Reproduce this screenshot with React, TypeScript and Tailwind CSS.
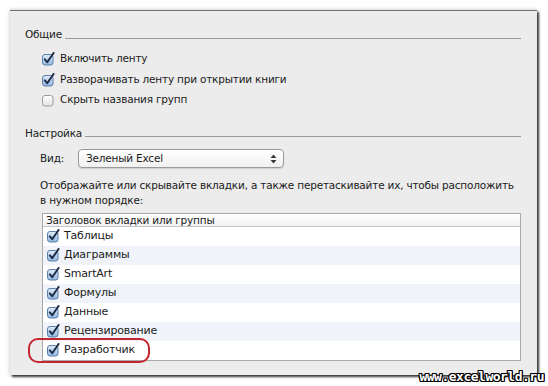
import React from "react";

function CheckBox({ checked }: { checked: boolean }) {
  return (
    <svg width="14" height="14" viewBox="0 0 14 14" className="shrink-0">
      <defs>
        <linearGradient id="cbOn" x1="0" y1="0" x2="0" y2="1">
          <stop offset="0" stopColor="#e2edf9" />
          <stop offset="1" stopColor="#8fb6e3" />
        </linearGradient>
        <linearGradient id="cbOff" x1="0" y1="0" x2="0" y2="1">
          <stop offset="0" stopColor="#ffffff" />
          <stop offset="1" stopColor="#e3e3e3" />
        </linearGradient>
      </defs>
      <rect
        x="0.5"
        y="2.5"
        width="10.5"
        height="10.5"
        rx="2.5"
        fill={checked ? "url(#cbOn)" : "url(#cbOff)"}
        stroke={checked ? "#5a7ea8" : "#9c9c9c"}
      />
      {checked && (
        <path
          d="M2.8 7.4 L5.2 10.2 L11.6 1"
          fill="none"
          stroke="#1d2b45"
          strokeWidth="2"
          strokeLinecap="round"
          strokeLinejoin="round"
        />
      )}
    </svg>
  );
}

function SectionTitle({ title }: { title: string }) {
  return (
    <div className="flex h-4 items-center gap-[3px]">
      <span>{title}</span>
      <div className="mt-[6px] h-px flex-1 bg-[#9b9b9b]" />
    </div>
  );
}

const tabs = ["Таблицы", "Диаграммы", "SmartArt", "Формулы", "Данные", "Рецензирование", "Разработчик"];

export default function App() {
  return (
    <div
      className="relative h-[386px] w-[548px] overflow-hidden bg-white pl-[10px] pt-[10px] text-[10.5px] tracking-[-0.2px] text-[#1b1b1b]"
      style={{ fontFamily: '"DejaVu Sans", "Noto Sans", sans-serif' }}
    >
      <div className="h-[365px] w-[527px] border-t border-[#707070] bg-[#ececec] pl-[15px] pr-[16px] pt-[16px] shadow-[2px_2px_2px_rgba(0,0,0,0.75),0_0_4px_rgba(0,0,0,0.25)]">
        <SectionTitle title="Общие" />
        <div className="mt-[6px] pl-[17px]">
          {[
            { label: "Включить ленту", on: true },
            { label: "Разворачивать ленту при открытии книги", on: true },
            { label: "Скрыть названия групп", on: false },
          ].map((r) => (
            <div key={r.label} className="flex h-[20.5px] items-center gap-[4px]">
              <CheckBox checked={r.on} />
              <span>{r.label}</span>
            </div>
          ))}
        </div>

        <div className="mt-[15px]">
          <SectionTitle title="Настройка" />
        </div>

        <div className="mt-[7px] flex h-5 items-center pl-[15px]">
          <span className="w-[38px]">Вид:</span>
          <div className="flex h-[19px] w-[206px] items-center justify-between rounded-[4px] border border-[#9a9a9a] bg-gradient-to-b from-white to-[#f0f0f0] pl-[7px] pr-[6px] shadow-[0_1px_1px_rgba(0,0,0,0.12)]">
            <span>Зеленый Excel</span>
            <svg width="7" height="10" viewBox="0 0 7 10">
              <path d="M3.5 0.5 L6.5 4 L0.5 4 Z" fill="#3a3a3a" />
              <path d="M3.5 9.5 L6.5 6 L0.5 6 Z" fill="#3a3a3a" />
            </svg>
          </div>
        </div>

        <p className="mt-[9px] whitespace-nowrap pl-[15px] leading-[15px]">
          Отображайте или скрывайте вкладки, а также перетаскивайте их, чтобы расположить
          <br />
          в нужном порядке:
        </p>

        <div className="ml-[17px] mt-[5px] w-[479px] border border-[#a9a9a9] bg-white">
          <div className="h-[13px] border-b border-[#c6c6c6] bg-gradient-to-b from-white to-[#f2f2f2] pl-[3px] leading-[13px]">
            Заголовок вкладки или группы
          </div>
          {tabs.map((t, i) => (
            <div
              key={t}
              className={`flex h-[19px] items-center gap-[3px] pl-[4px] ${i % 2 === 1 ? "bg-[#f0f4fa]" : "bg-white"}`}
            >
              <CheckBox checked={true} />
              <span className="text-[11px]">{t}</span>
            </div>
          ))}
        </div>
      </div>

      <div className="absolute left-[28px] top-[338px] h-[25px] w-[122px] rounded-[10px] border-2 border-[#c4262e]" />

      <div
        className="absolute bottom-[3px] right-[4px] text-[13px] font-bold leading-none tracking-[-0.5px] text-white [text-shadow:-1px_-1px_0_#000,1px_-1px_0_#000,-1px_1px_0_#000,1px_1px_0_#000,0_1px_0_#000,0_-1px_0_#000,1px_0_0_#000,-1px_0_0_#000]"
        style={{ fontFamily: '"DejaVu Sans Mono", monospace' }}
      >
        www.excelworld.ru
      </div>
    </div>
  );
}
